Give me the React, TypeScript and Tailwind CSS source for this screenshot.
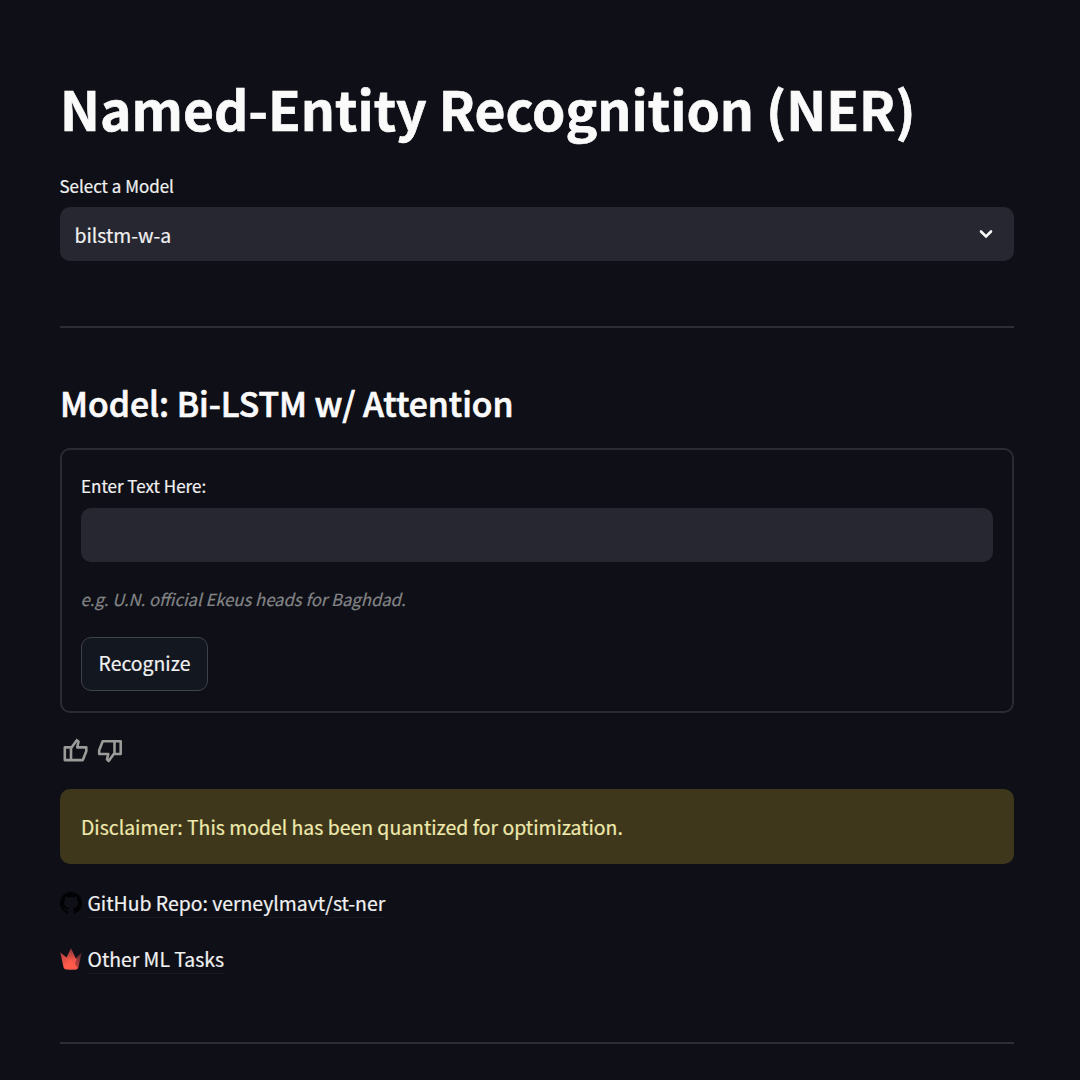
import React from "react";

const font = "font-['Noto_Sans_CJK_SC','Noto_Sans',sans-serif]";

function Label({ children, className }: { children: React.ReactNode; className: string }) {
  return (
    <div className={`flex items-center whitespace-nowrap ${className}`}>
      <span>{children}</span>
    </div>
  );
}

function ThumbUp() {
  return (
    <svg width="27" height="27" viewBox="0 0 27 27" fill="none" stroke="#9b9b9a" strokeWidth="2.6" strokeLinejoin="round">
      <path d="M2.8 10.4H9V23.1H2.8ZM9 11.3 14.8 3.2 16.5 4.8 15.2 10.4H24.3V14.2L20.8 23.1H9" />
    </svg>
  );
}

function ThumbDown() {
  return (
    <svg width="27" height="27" viewBox="0 0 27 27" fill="none" stroke="#9b9b9a" strokeWidth="2.6" strokeLinejoin="round">
      <path d="M23.7 4.3H17.5V17H23.7ZM17.5 16.1 11.7 24 10 22.4 11.3 17H2.2V13.2L5.7 4.3H17.5" />
    </svg>
  );
}

function GitHubMark() {
  return (
    <svg width="22" height="22" viewBox="0 0 16 16" fill="#020204">
      <path d="M8 0C3.58 0 0 3.58 0 8c0 3.54 2.29 6.53 5.47 7.59.4.07.55-.17.55-.38 0-.19-.01-.82-.01-1.49-2.01.37-2.53-.49-2.69-.94-.09-.23-.48-.94-.82-1.13-.28-.15-.68-.52-.01-.53.63-.01 1.08.58 1.23.82.72 1.21 1.87.87 2.33.66.07-.52.28-.87.51-1.07-1.78-.2-3.64-.89-3.64-3.95 0-.87.31-1.59.82-2.15-.08-.2-.36-1.02.08-2.12 0 0 .67-.21 2.2.82.64-.18 1.32-.27 2-.27s1.36.09 2 .27c1.53-1.04 2.2-.82 2.2-.82.44 1.1.16 1.92.08 2.12.51.56.82 1.27.82 2.15 0 3.07-1.87 3.75-3.65 3.95.29.25.54.73.54 1.48 0 1.07-.01 1.93-.01 2.2 0 .21.15.46.55.38A8.01 8.01 0 0 0 16 8c0-4.42-3.58-8-8-8Z" />
    </svg>
  );
}

function Crown() {
  return (
    <svg width="22" height="22" viewBox="0 0 22 22">
      <defs>
        <linearGradient id="crownMiddle" x1="0" y1="0" x2="0" y2="1">
          <stop offset="0" stopColor="#82343a" />
          <stop offset="0.6" stopColor="#f25549" />
        </linearGradient>
        <linearGradient id="crownRight" x1="1" y1="0" x2="0.2" y2="0.8">
          <stop offset="0" stopColor="#4a232c" />
          <stop offset="1" stopColor="#e94f45" />
        </linearGradient>
        <linearGradient id="crownLeft" x1="0" y1="0" x2="0.5" y2="0.6">
          <stop offset="0" stopColor="#b0403f" />
          <stop offset="1" stopColor="#ff5a4a" />
        </linearGradient>
      </defs>
      <path d="M21.7 4.4 18.4 19.5Q17.8 21.6 15.8 21.6H8L12.5 12 15.5 10.8Z" fill="url(#crownRight)" />
      <path d="M11 .2 16.3 11.5 14 20H8L5.8 11Z" fill="url(#crownMiddle)" />
      <path d="M.3 4.4 6.6 9.4Q11 11.5 17.5 19.5 17.2 21.6 15.2 21.6H6.4Q4.2 21.6 3.6 19.5Z" fill="url(#crownLeft)" />
    </svg>
  );
}

export default function App() {
  return (
    <main className={`h-[1080px] w-[1080px] overflow-hidden bg-[#0f1017] pt-[73px] pr-[66px] pl-[60px] text-[#f1f1f2] [-webkit-text-stroke:0.2px_currentColor] ${font}`}>
      <h1 className="flex h-[70px] items-center text-[53.35px] leading-[70px] font-bold whitespace-nowrap text-[#fafafa] [-webkit-text-stroke:0.7px_currentColor]">Named-Entity Recognition (NER)</h1>

      <Label className="-ml-[0.5px] mt-[29px] h-7 text-[16.95px] leading-7">Select a Model</Label>
      <div className="mt-[7px] flex h-[54px] items-center justify-between rounded-[10px] bg-[#262730] pr-[20px] pl-[14.5px]">
        <span className="pt-px text-[19.4px] leading-7">bilstm-w-a</span>
        <svg width="16" height="16" viewBox="0 0 16 16" fill="none" stroke="#fafafa" strokeWidth="2.6" strokeLinecap="round">
          <path d="M3 5.5 8 10.5 13 5.5" />
        </svg>
      </div>

      <hr className="mt-[65px] h-[2px] border-0 bg-[#2c2d35]" />

      <h2 className="mt-[48px] flex h-[54px] items-center text-[33.7px] leading-[54px] font-medium whitespace-nowrap text-[#fafafa] [-webkit-text-stroke:0.7px_currentColor]">Model: Bi-LSTM w/ Attention</h2>

      <form className="mt-[18px] h-[265px] rounded-[10px] border-2 border-[#2b2c33] px-[19px] pt-[22px]">
        <Label className="h-7 text-[17px] leading-7">Enter Text Here:</Label>
        <div className="mt-[8px] h-[54px] rounded-[10px] bg-[#262730]" />
        <Label className="-ml-[0.5px] mt-[23px] h-7 text-[16.7px] leading-7 text-[#838486] italic">e.g. U.N. official Ekeus heads for Baghdad.</Label>
        <button type="button" className="mt-[24px] flex h-[54px] w-[127px] items-center justify-center rounded-[10px] border-[1.5px] border-[#3f424a] bg-[#131720] pb-[2px] text-[19.4px] leading-7 [-webkit-text-stroke:0.2px_currentColor]">
          Recognize
        </button>
      </form>

      <div className="mt-[24px] flex h-[27px] gap-[8px] pl-[2px]">
        <ThumbUp />
        <ThumbDown />
      </div>

      <div className="mt-[25px] flex h-[75px] items-center rounded-[10px] bg-[#3e371b] px-[21px] text-[19.42px] leading-7 text-[#efe9ad]">
        <span className="pt-px whitespace-nowrap">Disclaimer: This model has been quantized for optimization.</span>
      </div>

      <a className="mt-[23px] flex h-8 items-center gap-[5.5px]">
        <GitHubMark />
        <span className="border-b border-[#181a20] text-[19.42px] leading-[28px] whitespace-nowrap">GitHub Repo: verneylmavt/st-ner</span>
      </a>
      <a className="mt-[24px] flex h-8 items-center gap-[5.5px]">
        <Crown />
        <span className="border-b border-[#181a20] text-[19.42px] leading-[28px] whitespace-nowrap">Other ML Tasks</span>
      </a>

      <hr className="mt-[67px] h-[2px] border-0 bg-[#2c2d35]" />
    </main>
  );
}
